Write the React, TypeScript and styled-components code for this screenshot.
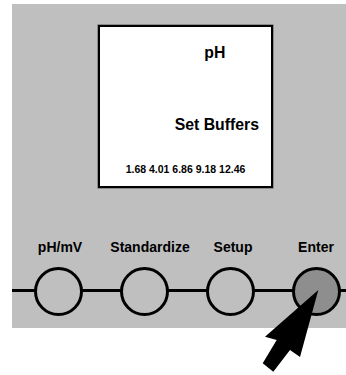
import React from "react";
import styled, { createGlobalStyle } from "styled-components";

const Global = createGlobalStyle`
  html, body { margin: 0; padding: 0; background: #fff; }
  body { font-family: "Liberation Sans", Arial, Helvetica, sans-serif; }
`;

const Page = styled.div`
  position: relative;
  width: 346px;
  height: 375px;
  padding: 4px 0 0 12px;
  box-sizing: border-box;
  overflow: hidden;
`;

const Panel = styled.div`
  background: #bfbfbf;
  width: 334px;
  height: 324px;
  box-sizing: border-box;
  padding-top: 21px;
  display: flex;
  flex-direction: column;
`;

const Display = styled.div`
  margin-left: 86px;
  width: 175px;
  height: 163px;
  box-sizing: border-box;
  background: #fff;
  border: 2px solid #000;
  box-shadow: 0 0 0 0.6px rgba(0, 0, 0, 0.45);
  display: flex;
  flex-direction: column;
  padding: 17px 12px 0 0;
`;

const TitleGroup = styled.div`
  align-self: flex-end;
  display: flex;
  flex-direction: column;
  align-items: center;
`;

const ScreenText = styled.div<{ $gap?: number; $shift?: number }>`
  font-weight: 700;
  font-size: 15.8px;
  line-height: 18px;
  color: #000;
  margin-top: ${(p) => p.$gap ?? 0}px;
  margin-right: ${(p) => p.$shift ?? 0}px;
  white-space: nowrap;
`;

const Buffers = styled.div`
  margin: 29px -12px 0 0;
  text-align: center;
  font-weight: 700;
  font-size: 10.5px;
  line-height: 12px;
  color: #000;
  white-space: nowrap;
`;

const Keys = styled.div`
  margin-top: 51px;
  display: flex;
  gap: 26px;
  padding-left: 16px;
  background: linear-gradient(
    to bottom,
    transparent calc(100% - 27px),
    #000 calc(100% - 27px),
    #000 calc(100% - 24px),
    transparent calc(100% - 24px)
  );
`;

const Key = styled.div`
  width: 60px;
  display: flex;
  flex-direction: column;
  align-items: center;
`;

const KeyLabel = styled.div<{ $shift: number }>`
  font-weight: 700;
  font-size: 14px;
  line-height: 16px;
  color: #000;
  white-space: nowrap;
  transform: translateX(${(p) => p.$shift}px);
`;

const KeyButton = styled.div<{ $pressed?: boolean }>`
  margin-top: 12px;
  width: 49px;
  height: 49px;
  box-sizing: border-box;
  border-radius: 50%;
  border: 3px solid #000;
  background: ${(p) => (p.$pressed ? "#8e8e8e" : "#bfbfbf")};
`;

const ArrowSvg = styled.svg`
  position: absolute;
  left: 250px;
  top: 280px;
  width: 96px;
  height: 95px;
`;

const keys = [
  { label: "pH/mV", shift: 2 },
  { label: "Standardize", shift: 6 },
  { label: "Setup", shift: 3 },
  { label: "Enter", shift: 0, pressed: true },
];

export default function App() {
  return (
    <>
      <Global />
      <Page>
        <Panel>
          <Display>
            <TitleGroup>
              <ScreenText $shift={4}>pH</ScreenText>
              <ScreenText $gap={54}>Set Buffers</ScreenText>
            </TitleGroup>
            <Buffers>1.68 4.01 6.86 9.18 12.46</Buffers>
          </Display>
          <Keys>
            {keys.map((k) => (
              <Key key={k.label}>
                <KeyLabel $shift={k.shift}>{k.label}</KeyLabel>
                <KeyButton $pressed={k.pressed} />
              </Key>
            ))}
          </Keys>
        </Panel>
        <ArrowSvg viewBox="0 0 96 95">
          <polygon
            points="68.3,10 15,56.7 26.7,60 12.7,83.3 23.3,91.7 40,70 50,77"
            fill="#000"
          />
        </ArrowSvg>
      </Page>
    </>
  );
}
